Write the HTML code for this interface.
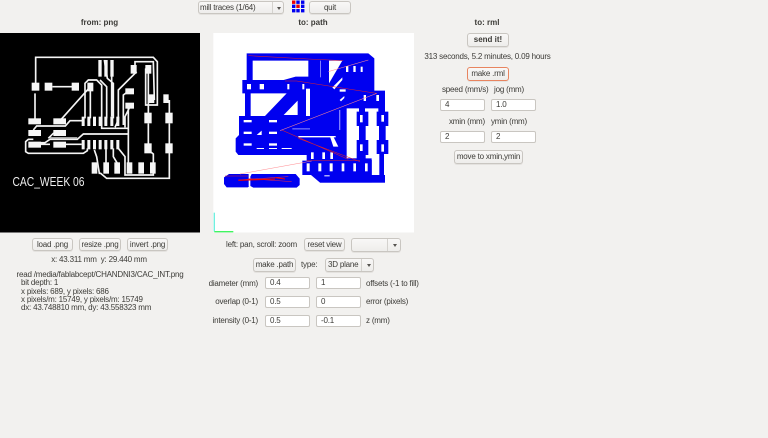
<!DOCTYPE html>
<html><head><meta charset="utf-8"><style>
html,body{margin:0;padding:0;width:768px;height:438px;overflow:hidden;background:#f2f1ef}
body{position:relative;font-family:"Liberation Sans",sans-serif;font-size:8px;letter-spacing:-.2px;color:#3c3b37;filter:blur(.3px)}
.t{position:absolute;white-space:nowrap;line-height:10px;height:10px}
.c{transform:translateX(-50%)}
.r{transform:translateX(-100%)}
.h{font-weight:bold;font-size:8px;letter-spacing:0;color:#3c3b37}
.b{position:absolute;box-sizing:border-box;border:1px solid #c9c6c1;border-radius:3px;background:linear-gradient(#f8f7f6,#eeedeb);text-align:center;white-space:nowrap;box-shadow:0 1px 0 #e4e2df}
.i{position:absolute;box-sizing:border-box;border:1px solid #c9c6c1;border-radius:2px;background:#fff;padding-left:4px;height:12px;line-height:10px;width:45px}
.a{position:absolute;top:0;bottom:0;border-left:1px solid #d4d2ce}
.a:after{content:"";position:absolute;left:50%;top:50%;margin:-1px 0 0 -2px;border:2px solid transparent;border-top:3px solid #55534f;border-bottom:0}
svg{position:absolute;left:0;top:0}
</style></head><body>

<div class="b" style="left:198px;top:1px;width:86px;height:13px;line-height:11px;text-align:left;padding-left:1px">mill traces (1/64)<span class="a" style="left:73px;width:12px"></span></div>
<div class="b" style="left:309px;top:1px;width:42px;height:13px;line-height:11px">quit</div>

<div class="t h c" style="left:99.5px;top:18px">from: png</div>
<div class="t h c" style="left:313px;top:18px">to: path</div>
<div class="t h c" style="left:487px;top:18px">to: rml</div>

<svg width="768" height="438" viewBox="0 0 768 438">
  <g fill="#0000f0">
    <rect x="292" y="0.5" width="3.4" height="3.4" fill="#f00000"/><rect x="296.3" y="0.5" width="3.4" height="3.4"/><rect x="301" y="0.5" width="3.4" height="3.4"/>
    <rect x="292" y="4.6" width="3.4" height="3.4"/><rect x="296.3" y="4.6" width="3.4" height="3.4" fill="#f00000"/><rect x="301" y="4.6" width="3.4" height="3.4"/>
    <rect x="292" y="9" width="3.4" height="3.4"/><rect x="296.3" y="9" width="3.4" height="3.4"/><rect x="301" y="9" width="3.4" height="3.4"/>
  </g>

  <!-- source PCB image -->
  <rect x="0" y="33" width="200" height="199.5" fill="#000"/>
  <g transform="scale(0.33333)">
    <g fill="none" stroke="#f4f4f4" stroke-width="5">
      <path d="M107 250V172H460L472 185V315H437V205"/>
      <path d="M445 210V340M405 195V185H460L463 300"/>
      <path d="M157 260H225M105 280V360"/>
      <path d="M271 260L180 362M271 270V355"/>
      <path d="M250 362H210L196 378H110L100 390"/>
      <path d="M255 355V250L265 240H290L305 255V385H385M300 240L320 260V355"/>
      <path d="M313 180L322 235L340 250V355M335 225V350"/>
      <path d="M410 215L355 270V360L345 382"/>
      <path d="M390 270L370 285V375M390 320L375 350V382M385 320V490"/>
      <path d="M445 370V435M508 300V340M508 370V435"/>
      <path d="M445 450L460 462V490M508 455V535H320L302 520H298L290 470L283 450"/>
      <path d="M318 445V490M340 445V470L352 490M355 445L375 470V525H460V490"/>
      <path d="M385 402H250L232 418H150L135 428H100M180 395L160 400L145 415"/>
      <path d="M100 418H85L77 425V455L85 460H250L262 452V445"/>
      <path d="M122 433H150M195 433H245"/>
    </g>
    <path d="M150 414H232" stroke="#bbb" stroke-width="5"/>
    <g fill="#f6f6f6">
      <rect x="95" y="248" width="23" height="24"/><rect x="134" y="248" width="23" height="24"/><rect x="215" y="248" width="22" height="24"/><rect x="262" y="248" width="18" height="26"/>
      <rect x="295" y="180" width="10" height="50"/><rect x="313" y="180" width="10" height="50"/><rect x="331" y="180" width="10" height="50"/>
      <rect x="392" y="195" width="18" height="26"/><rect x="436" y="195" width="18" height="26"/>
      <rect x="376" y="265" width="26" height="18"/><rect x="376" y="308" width="26" height="18"/>
      <rect x="443" y="283" width="20" height="26"/><rect x="490" y="283" width="16" height="26"/>
      <rect x="433" y="338" width="22" height="32"/><rect x="496" y="338" width="22" height="32"/><rect x="433" y="430" width="22" height="30"/><rect x="496" y="430" width="22" height="30"/>
      <rect x="85" y="355" width="38" height="18"/><rect x="160" y="355" width="38" height="18"/><rect x="85" y="390" width="38" height="18"/><rect x="160" y="390" width="38" height="18"/><rect x="85" y="425" width="38" height="18"/><rect x="160" y="425" width="38" height="18"/>
      <rect x="245" y="350" width="9" height="28"/><rect x="262" y="350" width="9" height="28"/><rect x="279" y="350" width="9" height="28"/><rect x="296" y="350" width="9" height="28"/><rect x="313" y="350" width="9" height="28"/><rect x="331" y="350" width="9" height="28"/><rect x="349" y="350" width="9" height="28"/>
      <rect x="245" y="420" width="9" height="28"/><rect x="262" y="420" width="9" height="28"/><rect x="279" y="420" width="9" height="28"/><rect x="296" y="420" width="9" height="28"/><rect x="313" y="420" width="9" height="28"/><rect x="331" y="420" width="9" height="28"/><rect x="349" y="420" width="9" height="28"/>
      <rect x="275" y="487" width="17" height="34"/><rect x="310" y="487" width="17" height="34"/><rect x="343" y="487" width="17" height="34"/><rect x="380" y="487" width="17" height="34"/><rect x="415" y="487" width="17" height="34"/><rect x="450" y="487" width="17" height="34"/>
    </g>
  </g>
  <text x="12.5" y="186" font-family="Liberation Sans, sans-serif" font-size="13" letter-spacing="0" fill="#efefef" textLength="72" lengthAdjust="spacingAndGlyphs">CAC_WEEK 06</text>

  <!-- path view -->
  <rect x="213.3" y="33" width="200.7" height="199.5" fill="#fff"/>
  <g transform="translate(205 0) scale(0.33333)">
    <!-- outer mass -->
    <path fill="#0000f0" d="M125 160H490L508 175V272H540V548H345L318 525H292V482H305V465H100L92 455V415L102 405V348H120V280H112V240H125Z"/>
    <!-- holes -->
    <g fill="#fff">
      <path d="M143 182H310V230H272L236 240H143Z"/>
      <path d="M137 280H245L180 348H137Z"/>
      <path d="M278 302V345H236Z"/>
      <path d="M303 266H315V348H303Z"/>
      <path d="M372 182H412L372 250Z"/>
      <rect x="345" y="182" width="3" height="50" fill="#8080ff"/>
      <path d="M382 262L412 232V240L388 268Z"/>
      <path d="M425 325H540V548H500V480H455V475H425Z"/>
      <path d="M375 410H385L400 440H385Z"/>
      <path d="M540 272H552V470H525V272Z" opacity="0"/>
    </g>
    <rect x="402" y="330" width="4" height="60" fill="#8080ff"/>
    <!-- chains -->
    <g fill="#0000f0">
      <path d="M462 322H480V335H490V378H482V420H490V465H482V480H500V525H440V480H455V420H462V378H455V335H462Z"/>
      <path d="M520 322H540V335H550V378H542V420H550V462H537V530H523V462H515V420H522V378H515V335H520Z"/>
      <path d="M375 475H500V525H375Z"/>
      <path d="M345 525H540V548H345Z"/>
    </g>
    <g fill="#fff">
      <rect x="126" y="252" width="12" height="16"/><rect x="164" y="252" width="13" height="16"/><rect x="247" y="252" width="6" height="16"/><rect x="292" y="252" width="6" height="16"/>
      <rect x="423" y="198" width="7" height="18"/><rect x="445" y="198" width="7" height="18"/><rect x="467" y="200" width="6" height="16"/>
      <rect x="476" y="285" width="7" height="18"/><rect x="514" y="285" width="8" height="18"/>
      <rect x="465" y="345" width="8" height="22"/><rect x="529" y="345" width="8" height="20"/><rect x="465" y="433" width="8" height="20"/><rect x="529" y="433" width="8" height="22"/>
      <rect x="404" y="268" width="18" height="7"/><path d="M404 300L418 288V294L408 304Z"/>
      <rect x="116" y="360" width="24" height="7"/><rect x="192" y="360" width="24" height="7"/>
      <rect x="116" y="395" width="24" height="7"/><rect x="192" y="395" width="24" height="7"/>
      <rect x="116" y="430" width="24" height="7"/><rect x="192" y="430" width="24" height="7"/>
      <rect x="155" y="444" width="22" height="3"/><rect x="192" y="444" width="24" height="3"/><rect x="230" y="444" width="30" height="3"/>
      <rect x="305" y="490" width="9" height="24"/><rect x="340" y="490" width="9" height="24"/><rect x="374" y="490" width="9" height="24"/><rect x="410" y="490" width="8" height="24"/><rect x="445" y="490" width="8" height="24"/><rect x="480" y="490" width="8" height="24"/>
      <rect x="318" y="457" width="8" height="20"/><rect x="352" y="457" width="8" height="20"/><rect x="376" y="457" width="8" height="20"/>
      <path d="M155 405L170 392V405ZM280 408H392V412H280Z"/>
      <rect x="358" y="526" width="16" height="3"/>
    </g>
    <path fill="#9090ff" d="M262 385H315V388H262Z"/>

    <path fill="#0000f0" d="M72 522H130L136 530V558L128 562H65L57 552V532ZM140 522H272L284 536V555L275 563H145L136 558V530Z"/>
    <rect x="131" y="524" width="5" height="36" fill="#fff"/>

    <g fill="none" stroke-width="1.6">
      <path d="M130 167L310 177L415 182M240 243H275L515 280M230 390L430 478M280 415L465 485M305 482H465M60 528H130" stroke="#e0202a"/>
      <path d="M370 215L490 180M515 280L225 392M320 483L105 522" stroke="#ff8a90"/>
      <path d="M100 540L250 530M130 536L260 545" stroke="#f03040"/>
      <path d="M100 541L210 537" stroke="#f00000" stroke-width="3.5"/>
      <path d="M210 533L240 537" stroke="#f00000" stroke-width="3"/>
    </g>
    <path d="M28 638V695" stroke="#6ff0e0" stroke-width="4" fill="none"/>
    <path d="M28 695H85" stroke="#40f560" stroke-width="4" fill="none"/>
  </g>
</svg>

<div class="b" style="left:32px;top:238px;width:41px;height:13px;line-height:11px">load .png</div>
<div class="b" style="left:79px;top:238px;width:42px;height:13px;line-height:11px">resize .png</div>
<div class="b" style="left:127px;top:238px;width:41px;height:13px;line-height:11px">invert .png</div>
<div class="t c" style="left:99px;top:255px">x: 43.311 mm&nbsp; y: 29.440 mm</div>
<div class="t" style="left:16.5px;top:270px">read /media/fablabcept/CHANDNI3/CAC_INT.png</div>
<div class="t" style="left:21px;top:278px">bit depth: 1</div>
<div class="t" style="left:21px;top:286.5px">x pixels: 689, y pixels: 686</div>
<div class="t" style="left:21px;top:295px">x pixels/m: 15749, y pixels/m: 15749</div>
<div class="t" style="left:21px;top:303px">dx: 43.748810 mm, dy: 43.558323 mm</div>

<div class="t" style="left:226px;top:240px">left: pan, scroll: zoom</div>
<div class="b" style="left:304px;top:238px;width:41px;height:13px;line-height:11px">reset view</div>
<div class="b" style="left:351px;top:238px;width:50px;height:14px"><span class="a" style="left:35px;width:13px"></span></div>
<div class="b" style="left:253px;top:258px;width:43px;height:14px;line-height:12px">make .path</div>
<div class="t" style="left:301px;top:260px">type:</div>
<div class="b" style="left:325px;top:258px;width:49px;height:14px;line-height:12px;text-align:left;padding-left:2px">3D plane<span class="a" style="left:35px;width:13px"></span></div>

<div class="t r" style="left:258px;top:279px">diameter (mm)</div>
<div class="i" style="left:265px;top:277px">0.4</div><div class="i" style="left:316px;top:277px">1</div>
<div class="t" style="left:366px;top:279px">offsets (-1 to fill)</div>
<div class="t r" style="left:258px;top:297px">overlap (0-1)</div>
<div class="i" style="left:265px;top:296px">0.5</div><div class="i" style="left:316px;top:296px">0</div>
<div class="t" style="left:366px;top:297px">error (pixels)</div>
<div class="t r" style="left:258px;top:316px">intensity (0-1)</div>
<div class="i" style="left:265px;top:315px">0.5</div><div class="i" style="left:316px;top:315px">-0.1</div>
<div class="t" style="left:366px;top:316px">z (mm)</div>

<div class="b" style="left:467px;top:33px;width:42px;height:14px;line-height:12px;font-weight:bold;letter-spacing:0">send it!</div>
<div class="t c" style="left:487.5px;top:52px">313 seconds, 5.2 minutes, 0.09 hours</div>
<div class="b" style="left:467px;top:67px;width:42px;height:14px;line-height:12px;border-color:#e8845f;border-radius:3px">make .rml</div>
<div class="t" style="left:442px;top:85px">speed (mm/s)</div>
<div class="t" style="left:494px;top:85px">jog (mm)</div>
<div class="i" style="left:440px;top:99px">4</div><div class="i" style="left:491px;top:99px">1.0</div>
<div class="t" style="left:449px;top:117px">xmin (mm)</div>
<div class="t" style="left:491px;top:117px">ymin (mm)</div>
<div class="i" style="left:440px;top:131px">2</div><div class="i" style="left:491px;top:131px">2</div>
<div class="b" style="left:454px;top:150px;width:69px;height:14px;line-height:12px">move to xmin,ymin</div>
</body></html>
